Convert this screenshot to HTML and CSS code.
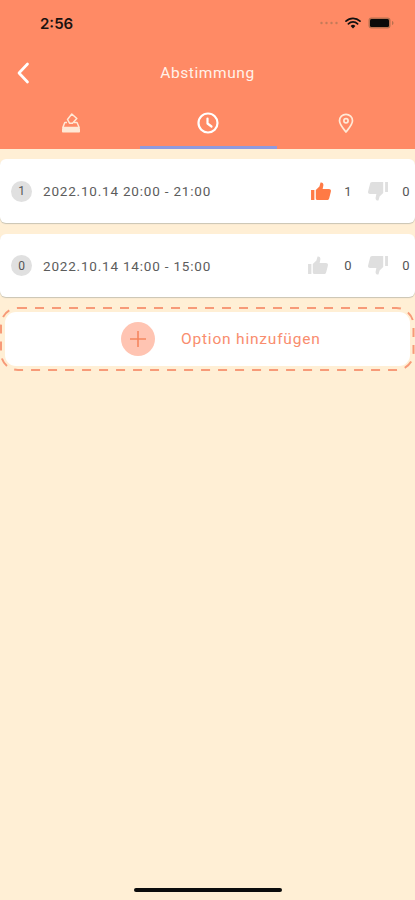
FILE: index.html
```html
<!DOCTYPE html>
<html lang="de">
<head>
<meta charset="utf-8">
<title>Abstimmung</title>
<link rel="stylesheet" href="styles.css">
</head>
<body>
<div class="screen">
  <header class="header">
    <div class="status">
      <span class="time">2:56</span>
      <div class="status-icons">
        <svg width="18" height="4" viewBox="0 0 18 4"><g fill="#c47a58"><circle cx="1.500" cy="2" r="1.200"/><circle cx="6.500" cy="2" r="1.200"/><circle cx="11.500" cy="2" r="1.200"/><circle cx="16.500" cy="2" r="1.200"/></g></svg>
        <svg width="16" height="12" viewBox="0 0 16 12"><path d="M1 4.200a10 10 0 0 1 14 0M3.400 6.800a6.600 6.600 0 0 1 9.200 0" fill="none" stroke="#111" stroke-width="1.700" stroke-linecap="round"/><path d="M8 11.400 5.600 8.900a3.400 3.400 0 0 1 4.800 0z" fill="#111"/></svg>
        <svg width="26" height="12" viewBox="0 0 26 12"><rect x=".5" y=".5" width="22" height="11" rx="3" fill="#b9704f"/><rect x="2" y="2" width="19" height="8" rx="1.500" fill="#0a0a0a"/><path d="M24 4v4c.9-.3 1.500-1.100 1.500-2s-.6-1.700-1.500-2z" fill="#b9704f"/></svg>
      </div>
    </div>
    <div class="nav">
      <svg class="back" width="14" height="22" viewBox="0 0 14 22"><path d="M11.500 2 3 11l8.500 9" fill="none" stroke="#fff" stroke-width="2.700" stroke-linecap="round" stroke-linejoin="round"/></svg>
      <h1 class="title">Abstimmung</h1>
    </div>
    <nav class="tabs">
      <div class="tab">
        <svg width="20" height="20" viewBox="0 0 20 20" fill="none" stroke="#ffe9d6" stroke-width="1.500" stroke-linejoin="round"><path d="M10.800 1 15.800 5.500 11.500 10.200H8.500L6.500 6.500z"/><path d="M6 9.500H3.800L1.800 14.500H18.200L16 9.500H13"/><rect x="1" y="15" width="18" height="4.500" rx=".8" fill="#ffe9d6" stroke="none"/></svg>
      </div>
      <div class="tab tab-active">
        <svg width="22" height="22" viewBox="0 0 22 22" fill="none" stroke="#fff" stroke-width="2.200" stroke-linecap="round" stroke-linejoin="round"><circle cx="11" cy="11" r="9.500"/><path d="M10.500 6.500V11.500l4 3"/></svg>
      </div>
      <div class="tab">
        <svg width="16" height="20" viewBox="0 0 16 20" fill="none" stroke="#ffe9d6" stroke-width="1.700" stroke-linejoin="round"><path d="M8 19C4.500 14.500 1.500 11.500 1.500 7.800a6.500 6.500 0 0 1 13 0C14.500 11.500 11.500 14.500 8 19z"/><circle cx="8" cy="7.800" r="2.100"/></svg>
      </div>
    </nav>
  </header>

  <main class="list">
    <section class="card">
      <span class="badge">1</span>
      <span class="range">2022.10.14 20:00 - 21:00</span>
      <div class="votes">
        <svg class="thumb thumb-on" width="21" height="19" viewBox="0 0 22 20"><use href="#up"/></svg>
        <span class="count count-first">1</span>
        <svg class="thumb" width="21" height="19" viewBox="0 0 22 20"><use href="#down"/></svg>
        <span class="count">0</span>
      </div>
    </section>
    <section class="card card-second">
      <span class="badge">0</span>
      <span class="range">2022.10.14 14:00 - 15:00</span>
      <div class="votes">
        <svg class="thumb" width="21" height="19" viewBox="0 0 22 20"><use href="#up"/></svg>
        <span class="count count-first">0</span>
        <svg class="thumb" width="21" height="19" viewBox="0 0 22 20"><use href="#down"/></svg>
        <span class="count">0</span>
      </div>
    </section>
    <button class="add" type="button">
      <svg class="dash" width="415" height="64" viewBox="0 0 415 64"><rect x="1" y="1" width="412.500" height="62" rx="17" fill="none" stroke="#f79a78" stroke-width="2" stroke-dasharray="9 8"/></svg>
      <span class="plus"><svg width="18" height="18" viewBox="0 0 18 18"><path d="M9 1v16M1 9h16" stroke="#f5865f" stroke-width="1.600"/></svg></span>
      <span class="add-label">Option hinzufügen</span>
    </button>
  </main>

  <div class="home"></div>
</div>
<svg class="defs" width="0" height="0" aria-hidden="true">
  <defs>
    <path id="up" d="M0 8.500h3.500V19H0zM5 8.500 8.800 4.800 10 .5c2-.4 3.200 1 3 3l-.8 3.800h6.600c1.700 0 2.500 1.300 2.100 2.700l-1.800 7c-.3 1.300-1.200 2-2.500 2H7.200C5.900 19 5 18.200 5 17z"/>
    <path id="down" d="M19 0H22v10.500h-3zM17 0v11.500l-3.800 3.700L12 19.500c-2 .4-3.200-1-3-3l.8-3.800H3.200c-1.700 0-2.500-1.300-2.100-2.700l1.800-7C3.200.7 4.100 0 5.400 0z"/>
  </defs>
</svg>
</body>
</html>
```
FILE: styles.css
```css
* { box-sizing: border-box; }
html, body { margin: 0; padding: 0; }
body { font-family: Roboto, "Liberation Sans", sans-serif; background: #ffefd5; }
.screen { position: relative; width: 415px; height: 900px; overflow: hidden; background: #ffefd5; display: flex; flex-direction: column; }
.header { background: #ff8a65; height: 149px; display: flex; flex-direction: column; flex: none; }
.status { height: 46px; display: flex; align-items: center; justify-content: space-between; padding: 0 21px 0 40px; }
.time { font-family: Inter, "Liberation Sans", sans-serif; font-size: 15px; font-weight: 600; color: #1a1210; }
.status-icons { display: flex; align-items: center; gap: 7px; }
.nav { height: 54px; position: relative; display: flex; align-items: center; justify-content: center; }
.back { position: absolute; left: 16px; top: 16px; }
.title { margin: 0; font-size: 15.500px; font-weight: 400; color: #fff2ea; letter-spacing: .6px; }
.tabs { flex: 1; display: grid; grid-template-columns: repeat(3, 1fr); padding-left: 2px; }
.tab { display: flex; align-items: center; justify-content: center; border-bottom: 3px solid transparent; }
.tab-active { border-bottom-color: #8f9adf; }
.list { display: flex; flex-direction: column; padding-top: 10px; }
.card { height: 64px; background: #fff; border-radius: 6px; display: flex; align-items: center; padding: 0 5px 0 11px; box-shadow: 0 1px 1px #c9c4b4; }
.card-second { margin-top: 11px; height: 63px; }
.badge { width: 21px; height: 21px; border-radius: 50%; background: #e0e0e0; color: #555; font-size: 12px; display: flex; align-items: center; justify-content: center; flex: none; }
.range { margin-left: 11px; font-size: 13.500px; color: #5c5c5c; letter-spacing: .8px; white-space: nowrap; }
.votes { margin-left: auto; display: flex; align-items: center; }
.thumb { fill: #dfdfdf; display: block; }
.thumb-on { fill: #ff7a45; margin-right: -3px; }
.count { font-size: 13px; color: #555; width: 8px; text-align: center; margin-left: 14px; }
.count-first { margin: 0 15px; }
.add { position: relative; margin: 10px 0 0; height: 64px; width: 415px; border: 0; padding: 5px; border-radius: 16px; background: #fff content-box; display: flex; align-items: center; font-family: inherit; }
.dash { position: absolute; left: 0; top: 0; }
.plus { margin-left: 116px; width: 34px; height: 34px; border-radius: 50%; background: #ffc4b2; display: flex; align-items: center; justify-content: center; flex: none; }
.add-label { margin-left: 26px; font-size: 15.500px; color: #f98d6e; letter-spacing: .8px; }
.home { position: absolute; left: 134px; bottom: 8px; width: 148px; height: 4px; border-radius: 2px; background: #0c0c0c; }
.defs { position: absolute; }
```
